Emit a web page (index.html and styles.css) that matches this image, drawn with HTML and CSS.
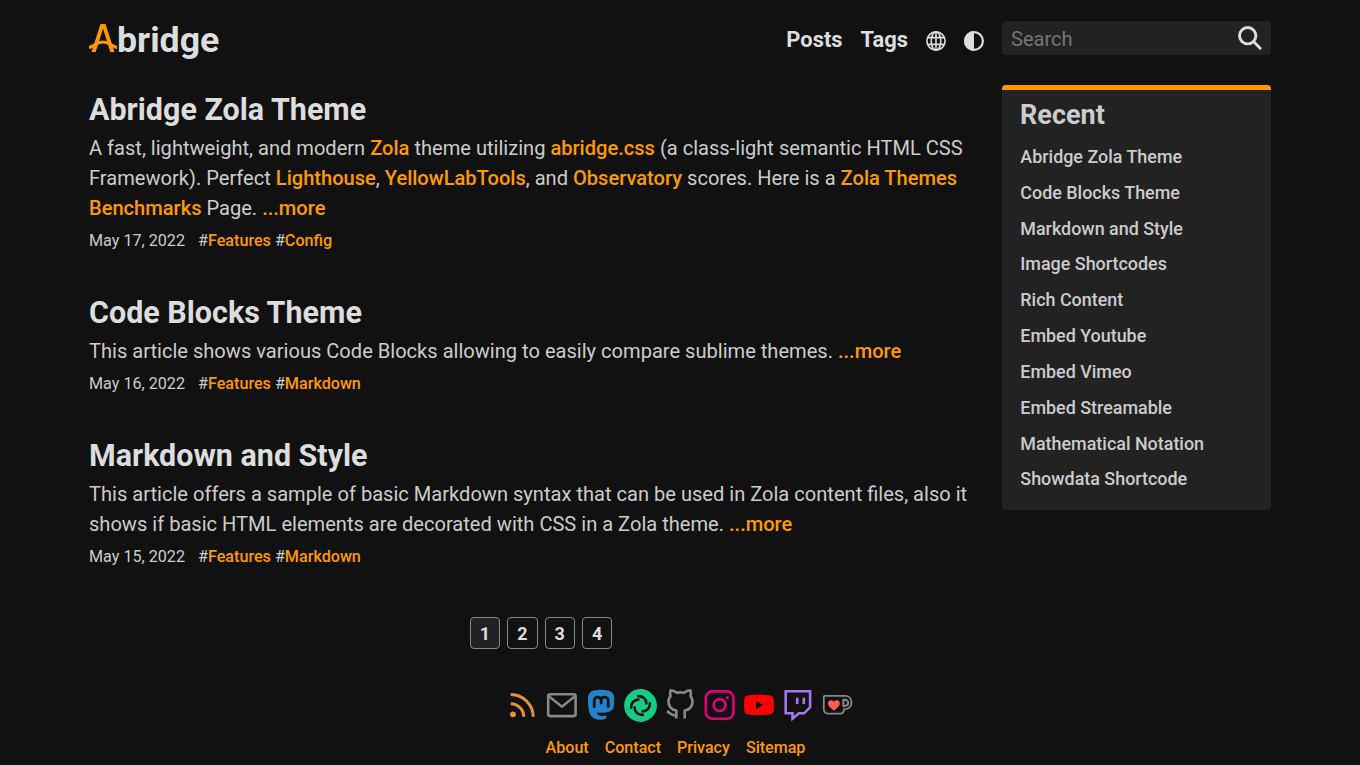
FILE: index.html
```
<!DOCTYPE html>
<html lang="en">
<head>
<meta charset="utf-8">
<title>Abridge</title>
<link rel="stylesheet" href="styles.css">
</head>
<body>
<div class="page">
  <header class="top">
    <a class="logo"><svg class="logo-mark" viewBox="0 0 28 30" aria-hidden="true"><path d="M2.500 29 11.500 1h5L25.500 29h-4.200L14 5.500 6.700 29z" fill="currentColor"/><path d="M0 24.800 6.500 21.500Q14 16.500 21.500 21.500L28 24.800" fill="none" stroke="currentColor" stroke-width="3"/></svg>bridge</a>
    <nav class="menu">
      <a>Posts</a><a>Tags</a>
      <svg class="nav-icon" viewBox="0 0 20 20" fill="none" stroke="currentColor" stroke-width="1.600"><circle cx="10" cy="10" r="9.100"/><ellipse cx="10" cy="10" rx="4.800" ry="9.100"/><path d="M10 1v18M1.700 6.600h16.600M1.700 13.400h16.600"/></svg>
      <svg class="nav-icon" viewBox="0 0 20 20"><circle cx="10" cy="10" r="8.900" fill="none" stroke="currentColor" stroke-width="2.200"/><path d="M10 0a10 10 0 0 0 0 20z" fill="currentColor"/></svg>
    </nav>
    <div class="search"><input type="text" placeholder="Search" aria-label="Search"><svg class="search-icon" viewBox="0 0 24 24" fill="none" stroke="currentColor" stroke-width="2.900"><circle cx="9.700" cy="9.700" r="8.200"/><path d="m15.500 15.500 6.700 6.700" stroke-linecap="round"/></svg></div>
  </header>
  <div class="columns">
    <main>
      <article>
        <h2>Abridge Zola Theme</h2>
        <p>A fast, lightweight, and modern <a>Zola</a> theme utilizing <a>abridge.css</a> (a class-light semantic HTML CSS Framework). Perfect <a>Lighthouse</a>, <a>YellowLabTools</a>, and <a>Observatory</a> scores. Here is a <a>Zola Themes Benchmarks</a> Page. <a>...more</a></p>
        <div class="meta"><time>May 17, 2022</time><span>#<a>Features</a> #<a>Config</a></span></div>
      </article>
      <article>
        <h2>Code Blocks Theme</h2>
        <p>This article shows various Code Blocks allowing to easily compare sublime themes. <a>...more</a></p>
        <div class="meta"><time>May 16, 2022</time><span>#<a>Features</a> #<a>Markdown</a></span></div>
      </article>
      <article>
        <h2>Markdown and Style</h2>
        <p>This article offers a sample of basic Markdown syntax that can be used in Zola content files, also it shows if basic HTML elements are decorated with CSS in a Zola theme. <a>...more</a></p>
        <div class="meta"><time>May 15, 2022</time><span>#<a>Features</a> #<a>Markdown</a></span></div>
      </article>
      <nav class="pages"><a class="current">1</a><a>2</a><a>3</a><a>4</a></nav>
    </main>
    <aside class="recent">
      <h3>Recent</h3>
      <ul>
        <li>Abridge Zola Theme</li><li>Code Blocks Theme</li><li>Markdown and Style</li><li>Image Shortcodes</li><li>Rich Content</li><li>Embed Youtube</li><li>Embed Vimeo</li><li>Embed Streamable</li><li>Mathematical Notation</li><li>Showdata Shortcode</li>
      </ul>
    </aside>
  </div>
  <footer>
    <div class="social">
      <svg class="rss" viewBox="0 0 33 33"><circle cx="7" cy="25.300" r="2.900" fill="currentColor"/><path d="M4.700 14.700A13.200 13.200 0 0 1 17.800 27.700M4.700 5.500A22.500 22.500 0 0 1 27.200 27.700" fill="none" stroke="currentColor" stroke-width="3"/></svg>
      <svg class="gray" viewBox="0 0 33 33" fill="none" stroke="currentColor" stroke-width="2.600"><rect x="3.200" y="5.300" width="27.400" height="21.800" rx="2"/><path d="m4.200 7.500 12.700 10.200L29.600 7.500"/></svg>
      <svg class="mastodon" viewBox="0 0 33 33"><path d="M8.700 1.500C12.700.6 19.200.6 23.200 1.500c3.600.8 6 3.600 6 7.300 0 4 .1 6.900-.6 9.700-.8 3-3.600 4.200-6.400 4.700-4 .7-7.800.7-10.200 0 .2 3.500 4.400 4.600 9.400 3.100v3.100c-5.100 2-12.300 1.800-15.300-2.400C3.400 23.300 2.800 15.700 3 8.800c.1-3.700 2.300-6.500 5.700-7.300z" fill="currentColor"/><path d="M9.200 18.800v-7.300c0-4.600 7-4.600 7 .2v3.600-3.600c0-4.800 7-4.800 7-.2v7.300" fill="none" stroke="#111" stroke-width="2.700"/></svg>
      <svg class="element" viewBox="0 0 33 33"><circle cx="16.500" cy="16.500" r="16.400" fill="currentColor"/><g fill="none" stroke="#111" stroke-width="2.600" stroke-linecap="round"><path d="M14.200 7.100c5-.2 8.200 3.100 8.200 7.300"/><path d="M14.200 7.100c5-.2 8.200 3.100 8.200 7.300" transform="rotate(90 16.500 16.500)"/><path d="M14.200 7.100c5-.2 8.200 3.100 8.200 7.300" transform="rotate(180 16.500 16.500)"/><path d="M14.200 7.100c5-.2 8.200 3.100 8.200 7.300" transform="rotate(270 16.500 16.500)"/></g></svg>
      <svg class="gray" viewBox="0 0 33 33" fill="none" stroke="currentColor" stroke-width="2.700" stroke-linejoin="round"><path d="M12.300 29.500v-8C8 20.700 4.500 18 4.500 12.200c0-2 .7-3.600 2-4.900-.8-2.200-.6-4.200.1-5.900 2.300 0 4.600 1 6.300 2.400q3.600-.8 7.200 0c1.700-1.400 4-2.400 6.300-2.400.7 1.700.9 3.700.1 5.900 1.300 1.300 2 2.900 2 4.900 0 5.800-3.300 8.500-7.800 9.300v8M12.300 26C8 27.500 6.500 24 3 22.200"/></svg>
      <svg class="instagram" viewBox="0 0 33 33" fill="none" stroke="currentColor" stroke-width="2.600"><rect x="2.800" y="2.400" width="27.600" height="27.300" rx="6.500"/><circle cx="16.600" cy="16.100" r="6"/><circle cx="24.500" cy="8.400" r="1.500" fill="currentColor" stroke="none"/></svg>
      <svg class="youtube" viewBox="0 0 33 33"><path d="M6.500 6.200Q17 5 27.500 6.200q4 .4 4.200 4.500.4 5 0 10.200-.3 4.300-4.200 4.700-10.500 1-21 0-4-.4-4.200-4.700-.4-5.200 0-10.200Q2.500 6.600 6.500 6.200z" fill="currentColor"/><path d="m14 11.900 7.200 4.100-7.200 4z" fill="#111"/></svg>
      <svg class="twitch" viewBox="0 0 33 33"><path d="M3.700 2.300h24.400v16l-6 6h-5.300l-6.300 5.400v-5.400H3.700zM15.200 8.700v6.200M21.800 8.700v6.200" fill="none" stroke="currentColor" stroke-width="2.600"/></svg>
      <svg class="gray" viewBox="0 0 33 33"><path d="M3.700 6.900H24c4.600 0 6.500 3.300 6.500 6.700 0 4.600-3.600 6.700-7.400 6.600-.2 3-1.700 4.400-4.200 4.400H7.200c-2.900 0-4.400-1.600-4.400-4.500V7.800q0-.9.900-.9z" fill="none" stroke="currentColor" stroke-width="1.800"/><path d="M22.400 10.700v6.200h1.300c4.700 0 4.700-6.200 0-6.200z" fill="none" stroke="currentColor" stroke-width="2"/><path d="M12.900 21.500c-3.300-2.700-5.900-4.600-5.900-7.300 0-3 4.100-4 5.900-1.300 1.800-2.700 5.900-1.700 5.900 1.300 0 2.700-2.600 4.600-5.900 7.300z" fill="#ff5e5b"/></svg>
    </div>
    <nav class="links"><a>About</a><a>Contact</a><a>Privacy</a><a>Sitemap</a></nav>
  </footer>
</div>
</body>
</html>
```
FILE: styles.css
```
* { box-sizing: border-box; }
body { margin: 0; height: 765px; overflow: hidden; background: #111; color: #ccc; font: 20.080px/30px Roboto, sans-serif; }
.page { width: 1182px; margin: 0 auto; }
a { color: #ff9900; font-weight: 500; }
.top { height: 85px; padding-top: 21px; display: flex; align-items: flex-start; color: #ddd; }
.logo { display: flex; color: #ddd; font-size: 35.700px; font-weight: 700; line-height: 39px; }
.logo-mark { width: 28px; height: 30px; margin-top: 2px; color: #ff9900; }
.menu { margin-left: auto; display: flex; align-items: center; gap: 18px; height: 38px; font-size: 21.900px; }
.menu a { color: #ddd; font-weight: 700; }
.nav-icon { width: 20px; height: 20px; margin-top: 2px; }
.search { width: 269px; height: 34px; margin-left: 18px; display: flex; align-items: center; background: #222; border-radius: 4px; }
.search input { flex: 1; min-width: 0; border: 0; padding: 1px 9px 0; background: transparent; font: 20.080px/24px Roboto, sans-serif; color: #ccc; outline: 0; }
.search input::placeholder { color: #757575; opacity: 1; }
.search-icon { width: 24px; height: 24px; margin-right: 9px; }
.columns { display: grid; grid-template-columns: 895px 269px; column-gap: 18px; align-items: start; }
main { padding-top: 5px; }
article { height: 143px; }
article:first-child { height: 203px; }
article:nth-child(3) { height: 173px; }
h2 { margin: 0; color: #ddd; font-size: 30.480px; line-height: 39px; font-weight: 700; }
article p { margin: 4px 0 0; }
.meta { display: flex; gap: 13px; margin-top: 6px; font-size: 16.150px; line-height: 24px; }
.pages { display: flex; justify-content: center; gap: 7px; width: 904px; padding-top: 8px; }
.pages a { width: 30.400px; height: 32px; border: 1px solid #888; border-radius: 4px; color: #ddd; font-size: 18px; font-weight: 700; line-height: 32px; text-align: center; }
.pages .current { background: #222; }
.recent { height: 425px; padding: 10px 18px; border-top: 5px solid #ff9900; border-radius: 4px; background: #222; }
h3 { margin: 0; font-size: 27px; line-height: 30px; font-weight: 700; }
.recent ul { list-style: none; margin: 9px 0 0; padding: 0 0 0 0.300px; font-size: 17.920px; font-weight: 500; line-height: 35.820px; }
footer { padding-top: 40px; }
.social { display: flex; justify-content: center; gap: 6.450px; }
.social svg { width: 33px; height: 33px; flex: none; }
.rss { color: #e99336; }
.gray { color: #888; }
.mastodon { color: #2482cb; }
.element { color: #15cc86; }
.instagram { color: #e4007c; }
.youtube { color: #f00; }
.twitch { color: #a277ef; }
.links { display: flex; justify-content: center; gap: 16px; margin-top: 14px; font-size: 16.080px; line-height: 24px; margin-right: 9px; }
```
